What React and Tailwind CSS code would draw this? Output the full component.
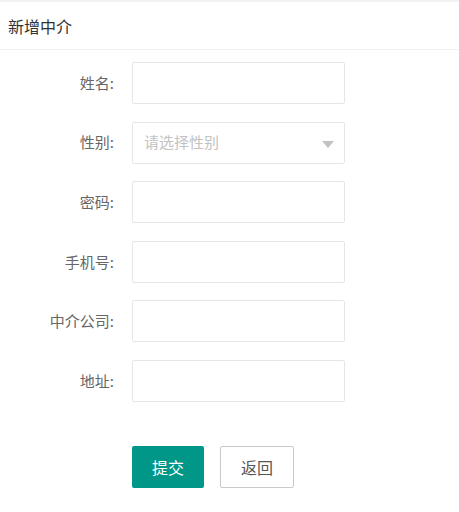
import React from 'react';

const font = { fontFamily: '"Noto Sans CJK SC", "Noto Sans", sans-serif' };

const fields = [
  { label: '姓名', type: 'input' },
  { label: '性别', type: 'select', placeholder: '请选择性别' },
  { label: '密码', type: 'input' },
  { label: '手机号', type: 'input' },
  { label: '中介公司', type: 'input' },
  { label: '地址', type: 'input' },
];

export default function App() {
  return (
    <div className="min-h-[512px] bg-[#f2f2f2] pt-[2px]" style={font}>
      <div className="bg-white min-h-[510px]">
        {/* Header */}
        <div className="h-[48px] flex items-center px-[8px] border-b border-[#f2f2f2] text-[16px] text-[#333]">
          新增中介
        </div>

        {/* Form */}
        <form className="pt-[12px]" onSubmit={(e) => e.preventDefault()}>
          {fields.map((f) => (
            <div key={f.label} className="flex items-center h-[42px] mb-[17.6px]">
              <label className="w-[132px] pr-[18px] text-right text-[15px] text-[#666]">
                {f.label}:
              </label>
              {f.type === 'select' ? (
                <div className="relative w-[213px] h-[42px] border border-[#e6e6e6] rounded-[2px] flex items-center pl-[11px]">
                  <span className="text-[15px] text-[#c2c2c2]">{f.placeholder}</span>
                  <span className="absolute right-[10px] top-[18px] w-0 h-0 border-x-[6px] border-x-transparent border-t-[7px] border-t-[#c2c2c2]" />
                </div>
              ) : (
                <input
                  type="text"
                  className="w-[213px] h-[42px] border border-[#e6e6e6] rounded-[2px] px-[10px] text-[15px] outline-none"
                />
              )}
            </div>
          ))}

          <div className="flex gap-[16px] pl-[132px] mt-[44px]">
            <button
              type="submit"
              className="w-[72px] h-[42px] bg-[#009688] text-white text-[16px] rounded-[2px]"
            >
              提交
            </button>
            <button
              type="button"
              className="w-[74px] h-[42px] bg-white border border-[#c9c9c9] text-[#555] text-[16px] rounded-[2px]"
            >
              返回
            </button>
          </div>
        </form>
      </div>
    </div>
  );
}
